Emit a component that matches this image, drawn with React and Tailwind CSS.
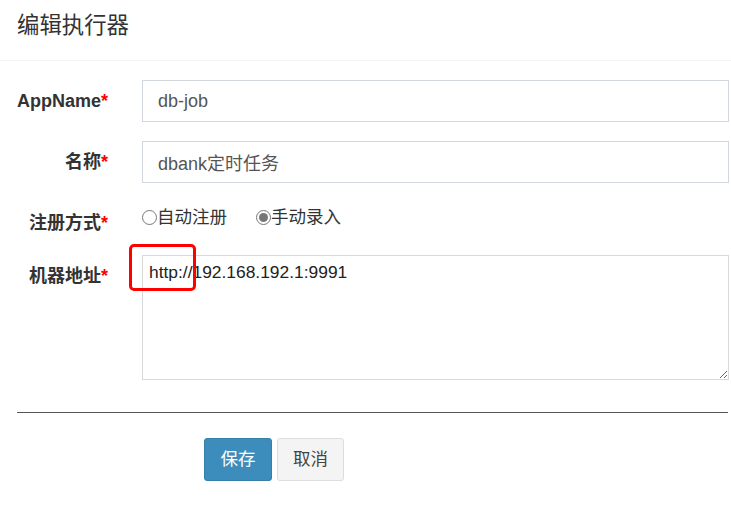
const labelCls = "w-[91px] shrink-0 text-right text-[18px] font-bold text-[#333] leading-[20px] pt-[11px]";

const Label = ({ children }) => (
    <div className={labelCls}>
        {children}
        <span className="text-[#f00]">*</span>
    </div>
);

const Radio = ({ checked, children }) => (
    <label className="flex items-center text-[17.5px] text-[#333] leading-[20px]">
        <span className="w-[15px] h-[15px] rounded-full border border-[#777] bg-white flex items-center justify-center">
            {checked && <span className="w-[9px] h-[9px] rounded-full bg-[#777]" />}
        </span>
        {children}
    </label>
);

export default function App() {
    return (
        <div className="relative w-[731px] h-[507px] bg-white overflow-hidden" style={{ fontFamily: '"Liberation Sans", "Noto Sans CJK SC", sans-serif' }}>
            {/* header */}
            <div className="h-[61px] px-[17px] pt-[13px] border-b border-[#f4f4f4]">
                <h4 className="text-[22.4px] leading-[26px] text-[#333]">编辑执行器</h4>
            </div>

            {/* form */}
            <div className="pl-[17px] pr-[2px] pt-[19px]">
                <div className="flex gap-[34px]">
                    <Label>AppName</Label>
                    <input
                        defaultValue="db-job"
                        className="flex-1 h-[42px] border border-[#d2d6de] px-[15px] text-[18px] text-[#555] outline-none"
                    />
                </div>

                <div className="flex gap-[34px] mt-[19px]">
                    <Label>名称</Label>
                    <input
                        defaultValue="dbank定时任务"
                        className="flex-1 h-[42px] border border-[#d2d6de] px-[15px] text-[18px] text-[#555] outline-none"
                    />
                </div>

                <div className="flex gap-[34px] mt-[19px] h-[34px]">
                    <Label>注册方式</Label>
                    <div className="flex items-start gap-[29px] pt-[5px]">
                        <Radio>自动注册</Radio>
                        <Radio checked>手动录入</Radio>
                    </div>
                </div>

                <div className="flex gap-[34px] mt-[19px]">
                    <Label>机器地址</Label>
                    <textarea
                        defaultValue="http://192.168.192.1:9991"
                        className="flex-1 h-[125px] border border-[#d9d9d9] px-[6px] py-[5px] text-[17.4px] leading-[22px] text-[#222] outline-none"
                    />
                </div>

                <div className="h-px bg-[#555] mt-[32px] mr-[1px]" />

                <div className="flex gap-[5px] mt-[25px] pl-[187px]">
                    <button className="w-[68px] h-[43px] rounded-[3px] bg-[#3c8dbc] border border-[#367fa9] text-white text-[17.5px]">保存</button>
                    <button className="w-[67px] h-[43px] rounded-[3px] bg-[#f4f4f4] border border-[#ddd] text-[#444] text-[17.5px]">取消</button>
                </div>
            </div>

            {/* annotation box */}
            <div className="absolute left-[129px] top-[244px] w-[67px] h-[47px] border-[3px] border-[#f00] rounded-[5px] pointer-events-none" />
        </div>
    );
}
